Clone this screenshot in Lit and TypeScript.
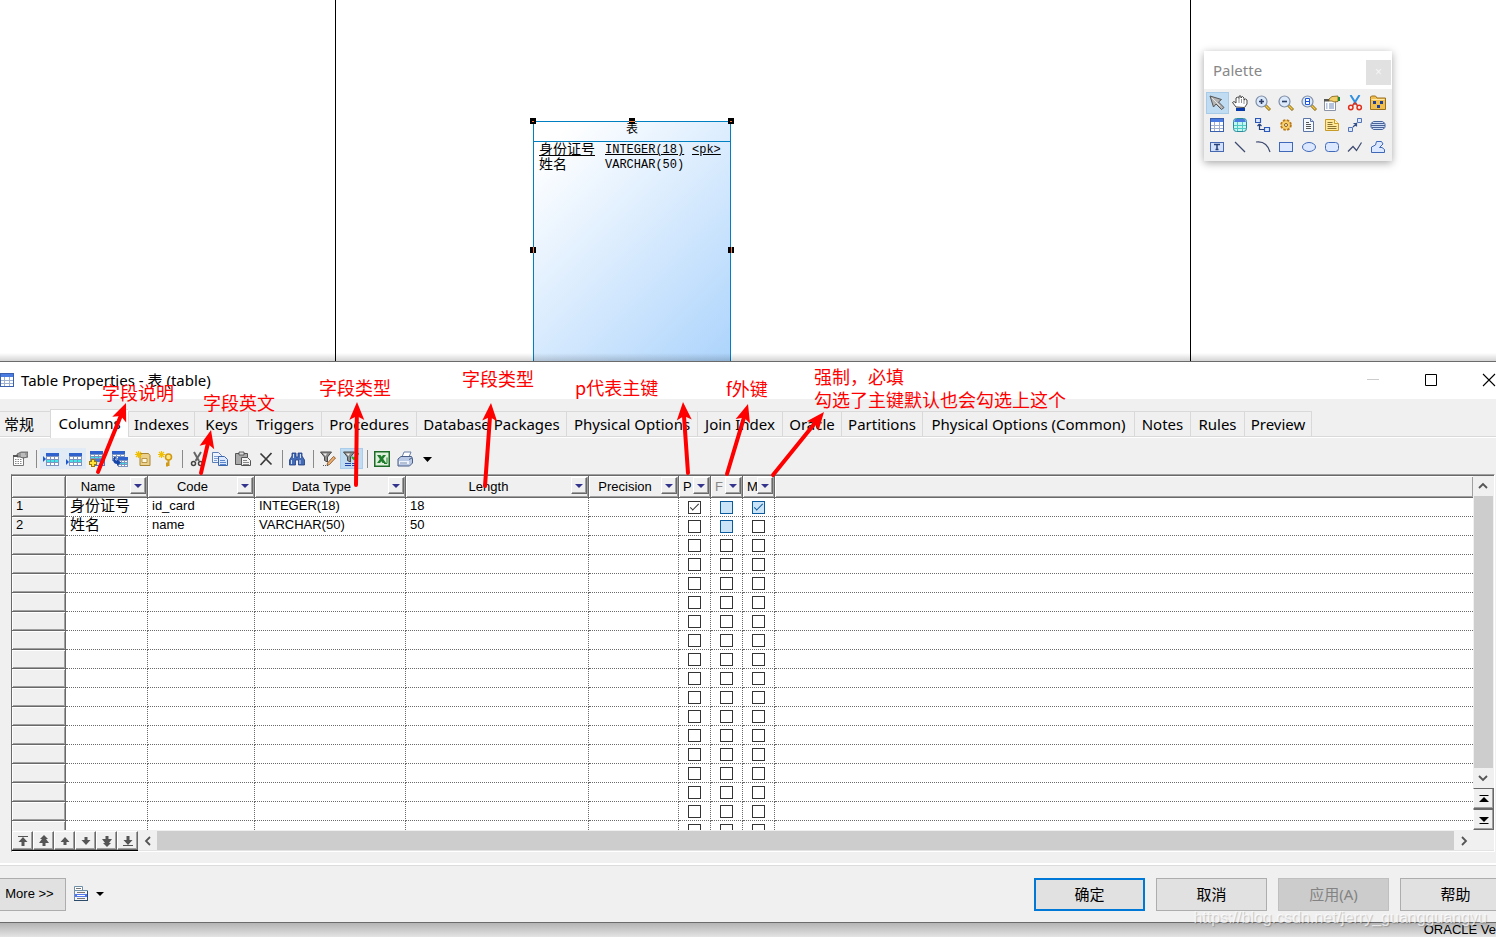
import { LitElement, html, svg, css, nothing } from "lit";
import { customElement, state } from "lit/decorators.js";
import { classMap } from "lit/directives/class-map.js";

type Column = { key: string; label: string; cls: string };
type Row = { name?: string; code?: string; type?: string; length?: string; p?: boolean; m?: boolean; named?: boolean };
type Arrow = [number, number, number, number];
type Note = [number, number, string];

const TABS = [
  "常规", "Columns", "Indexes", "Keys", "Triggers", "Procedures", "Database Packages",
  "Physical Options", "Join Index", "Oracle", "Partitions", "Physical Options (Common)",
  "Notes", "Rules", "Preview",
];

const COLUMNS: Column[] = [
  { key: "name", label: "Name", cls: "c-name" },
  { key: "code", label: "Code", cls: "c-code" },
  { key: "type", label: "Data Type", cls: "c-type" },
  { key: "length", label: "Length", cls: "c-length" },
  { key: "precision", label: "Precision", cls: "c-precision" },
  { key: "p", label: "P", cls: "c-flag" },
  { key: "f", label: "F", cls: "c-flag" },
  { key: "m", label: "M", cls: "c-flag" },
];

const ROWS: Row[] = [
  { name: "身份证号", code: "id_card", type: "INTEGER(18)", length: "18", p: true, m: true, named: true },
  { name: "姓名", code: "name", type: "VARCHAR(50)", length: "50", named: true },
  ...Array.from({ length: 16 }, () => ({})),
];

const ARROWS: Arrow[] = [
  [98, 472, 126, 403],
  [201, 473, 211, 430],
  [356, 485, 357, 402],
  [485, 486, 491, 403],
  [688, 473, 683, 402],
  [727, 474, 748, 404],
  [773, 475, 824, 412],
];

const NOTES: Note[] = [
  [102, 400, "字段说明"],
  [203, 410, "字段英文"],
  [319, 395, "字段类型"],
  [462, 386, "字段类型"],
  [575, 395, "p代表主键"],
  [726, 396, "f外键"],
  [814, 384, "强制，必填"],
  [814, 407, "勾选了主键默认也会勾选上这个"],
];

const icon = (body: unknown, label = "") =>
  html`<svg class="icon" viewBox="0 0 16 16" width="16" height="16" aria-label=${label || nothing}>${body}</svg>`;

const miniTable = (x: number, y: number, w: number, h: number, accent = "#fff") => svg`
  <rect x=${x} y=${y} width=${w} height=${h} fill="#7d93c0"/>
  <rect x=${x} y=${y} width=${w} height="3" fill="#2f62cc"/>
  ${[0, 1, 2].map((r) => [0, 1, 2].map((c) => svg`<rect
      x=${x + 1 + c * ((w - 1) / 3)} y=${y + 4 + r * ((h - 4) / 3)}
      width=${(w - 1) / 3 - 1} height=${(h - 4) / 3 - 1} fill=${r === 1 ? accent : "#fff"}/>`))}`;

const magnifier = (mark: unknown) => svg`
  <path d="M10 10l5 5" stroke="#8a6a10" stroke-width="3"/><path d="M10.500 10.500l4 4" stroke="#f2c94a" stroke-width="1.500"/>
  <circle cx="6.500" cy="6.500" r="5.500" fill="#dbe9fb" stroke="#7f8ea6" stroke-width="1.200"/>${mark}`;

const funnel = svg`<path d="M0.500 1h11L7.500 6v5l-3-1.500V6z" fill="#8c8c8c" stroke="#4a4a4a"/><path d="M3 2.500h4L5.500 5z" fill="#eee"/>`;

const I = {
  props: svg`<path d="M1.500 5.500h10v9h-10z" fill="#fff" stroke="#777"/><path d="M3 8.500h7M3 10.500h7M3 12.500h7" stroke="#888" stroke-dasharray="1.500 1"/>
    <path d="M5 3l4-2 7 0v5l-5 1-3-1-3 0z" fill="#999" stroke="#555" stroke-width=".8"/><path d="M1 4h5v2H1z" fill="#555"/><path d="M9 3h4M9 5h5" stroke="#ddd"/>`,
  insertRow: svg`<path d="M0 5l3 3-3 3z" fill="#1b57d0"/>${miniTable(3, 2, 13, 13, "#38e8e8")}`,
  addRow: svg`<path d="M0 8l3 3-3 3z" fill="#1b57d0"/>${miniTable(3, 2, 13, 13, "#38e8e8")}`,
  addCols: svg`${miniTable(1, 0, 13, 10, "#38e8e8")}<path d="M6 8h10v7H6z" fill="#4b78d6"/><path d="M7 11h8v3H7z" fill="#cfe0ff"/>
    <path d="M4 8v8M0 12h8" stroke="#a07800" stroke-width="4"/><path d="M4 9v6M1 12h6" stroke="#ffe23c" stroke-width="2"/>`,
  replaceCols: svg`${miniTable(0, 0, 13, 10, "#fff")}${miniTable(6, 6, 10, 10, "#38e8e8")}<path d="M2 6c-2 4 0 7 3 7v2l4-3.500L5 8v2c-2 0-2-2-1-4z" fill="#1544a8"/>`,
  addIndex: svg`<path d="M5 2.500h8.500l1.500 2v10H5z" fill="#ead08b" stroke="#a98433"/><path d="M7 7.500h5v4H7z" fill="#fff8dc" stroke="#a98433" stroke-width=".8"/>
    <path d="M3.500 0v7M0 3.500h7M1 1l5 5M6 1l-5 5" stroke="#f0c000" stroke-width="1.200"/>`,
  addKey: svg`<circle cx="10.500" cy="6" r="3" fill="#ffe680" stroke="#d09a18" stroke-width="1.600"/><path d="M10.500 9V15M10 12.500H8M10 14.500H8" stroke="#d09a18" stroke-width="2"/>
    <path d="M3.500 0v7M0 3.500h7M1 1l5 5M6 1l-5 5" stroke="#f0c000" stroke-width="1.200"/>`,
  cut: svg`<path d="M5 1l5 9M12 1L6.500 10" stroke="#666" stroke-width="2"/><circle cx="4.500" cy="12.500" r="2" fill="none" stroke="#444" stroke-width="1.500"/><circle cx="11.500" cy="12.500" r="2" fill="none" stroke="#444" stroke-width="1.500"/>`,
  copy: svg`<path d="M.5 1.500h6l3 3v7h-9z" fill="#eef4ff" stroke="#5c7fb8"/><path d="M2 5.500h5M2 7.500h5M2 9.500h3" stroke="#7fa0d0"/>
    <path d="M6.500 5.500h6l3 3v6h-9z" fill="#dbe8ff" stroke="#3d66ad"/><path d="M8 9.500h5M8 11.500h6M8 13.500h6" stroke="#5c86cc"/>`,
  paste: svg`<path d="M.5 2.500h12v11H.5z" fill="#aaa" stroke="#555"/><path d="M4 1h5v3H4z" fill="#ddd" stroke="#444" stroke-width=".8"/>
    <path d="M6.500 6.500h6l3 3v5h-9z" fill="#f4f4f4" stroke="#555"/><path d="M8 9.500h4M8 11.500h6M8 13.500h6" stroke="#888"/>`,
  remove: svg`<path d="M2.500 2.500l11 11M13.500 2l-11 12" stroke="#3a3a3a" stroke-width="1.700"/>`,
  find: svg`<path d="M3 2h4v4h2V2h4v3l2.500 4v5H9.500V9h-3v5H.5V9L3 5z" fill="#456bb5" stroke="#1d3b80" stroke-width=".8"/><path d="M2.500 9v4M4.500 3v4M11 9v4M11.500 3v4" stroke="#cfe0ff"/>`,
  filterEdit: svg`${funnel}<path d="M15.500 7l-6 6.500-2.500 1 .5-2.500L13.500 5.500z" fill="#f0b070" stroke="#7a4a20" stroke-width=".8"/><path d="M3 14.500h5" stroke="#555" stroke-dasharray="1 1"/>`,
  filterOn: svg`${funnel}<path d="M9 6l2 2 4.500-6" fill="none" stroke="#1faa2a" stroke-width="2"/><path d="M2 12.500h6M9 12.500h6M2 14.500h6M9 14.500h6" stroke="#2745a8"/>`,
  excel: svg`<rect x=".75" y=".75" width="14.500" height="14.500" fill="#dff0dc" stroke="#1e6b28" stroke-width="1.500"/><path d="M3 4h3.500l5.500 8H8.500z" fill="#1f7d2c"/><path d="M12 4H9L3 12h3z" fill="#1f7d2c"/><path d="M10 12.500h3v-6" fill="none" stroke="#1f7d2c"/>`,
  print: svg`<path d="M5 6l2-5h7l-2 5z" fill="#fff" stroke="#6a7fa5"/><path d="M1 8l3-2.500h10.500l1 2v4.500l-3 3H1z" fill="#b9c8e4" stroke="#4a5f88"/><path d="M2 10h10v3H2z" fill="#eef3fc"/><path d="M12 8.500l3-1.500" stroke="#4a5f88"/><path d="M3 12h7" stroke="#7a8cb0"/>`,
  caret: svg`<path d="M3 6h9L7.500 11z" fill="#000"/>`,
  caretSmall: svg`<path d="M4 6h8l-4 4z" fill="#000"/>`,
  menuSheet: svg`<path d="M.5 .5h8v5h-8z" fill="#fff" stroke="#6f8fa8"/><path d="M2 2.500h5" stroke="#777"/><path d="M.5 4.500h13v10H.5z" fill="#f6f6f6" stroke="#6f8fa8"/><path d="M13.500 5v10M0 14.500h14" stroke="#2c4a6a"/>
    <path d="M3 6.500h8M3 12.500h8" stroke="#777"/><path d="M1 8h12v3H1z" fill="#5577ee"/><path d="M3 9.500h8" stroke="#fff"/>`,
  pointer: svg`<path d="M1 1l3.500 11 2.500-3 5.500 5.500 2.500-2-5.500-5.500 3-2.500z" fill="#b4b4b4" stroke="#555"/><path d="M3 3l8 8" stroke="#e4e4e4"/>`,
  hand: svg`<path d="M4 12L.5 7.500l1.500-1L4 8V3l1.500-1L7 3.500V1h2v2l1.500-1.500L12 3v2l1.500-1L15 5v4l-2.500 3.500z" fill="#fff" stroke="#333" stroke-width=".9"/><path d="M7 4v4M9.500 4v4M12 5v4" stroke="#666" stroke-width=".7"/><path d="M4 13h9v3H4z" fill="#0a3ba8"/>`,
  zoomIn: magnifier(svg`<path d="M6.500 4v5M4 6.500h5" stroke="#2d3e66" stroke-width="1.600"/>`),
  zoomOut: magnifier(svg`<path d="M4 6.500h5" stroke="#2d3e66" stroke-width="1.600"/>`),
  zoomFit: magnifier(svg`<path d="M4.500 3.500h4v6h-4zM4.500 6.500h4" fill="#fff" stroke="#1f55d8"/>`),
  propsColor: svg`<path d="M.5 5.500h11v10H.5z" fill="#fff" stroke="#8a93a5"/><path d="M2 9h1.500M5 9h5M2 11h1.500M5 11h5M2 13h1.500M5 13h5" stroke="#6b86b8"/>
    <path d="M5 4l3-2.500L14 1v5.500l-4 .5-2-1H5z" fill="#f3cf6a" stroke="#7a5a10" stroke-width=".8"/><path d="M14 2h2v4h-2z" fill="#1a8a3a"/><path d="M0 4h5v2.500H0z" fill="#555"/>`,
  scissors: svg`<path d="M3.500 0l6 9.500M12.500 0l-6 9.500" stroke="#2f8fe0" stroke-width="2"/><circle cx="3.800" cy="12.500" r="2.200" fill="none" stroke="#e0301c" stroke-width="1.500"/><circle cx="12.200" cy="12.500" r="2.200" fill="none" stroke="#e0301c" stroke-width="1.500"/><path d="M5 11l3-3 3 3" fill="none" stroke="#e0301c" stroke-width="1.500"/>`,
  packageBox: svg`<path d="M.5 3.500V2l1-1h4l1.500 2h8.500v11.500H.5z" fill="#f0bf50" stroke="#9a7020"/><path d="M1.500 4.500h13" stroke="#ffe9a8"/><path d="M3 6h3v3H3zM10 6h3v3h-3zM7 10h3v3H7z" fill="#1e3f9a"/>`,
  table: svg`<rect x="1.500" y="1.500" width="13" height="13" fill="#fff" stroke="#3a5fae"/><rect x="2" y="2" width="12" height="3" fill="#4a7be0"/><path d="M2 8.500h12M2 11.500h12M5.500 5v9M10.500 5v9" stroke="#9fb0d0"/>`,
  view: svg`<rect x="1.500" y="1.500" width="13" height="13" rx="3" fill="#c4f6f2" stroke="#2a8c9c"/><path d="M3.500 2h9l1.500 3H2z" fill="#4a7be0"/><path d="M2 8.500h12M2 11.500h12M5.500 5v9M10.500 5v9" stroke="#50c8c4"/>`,
  reference: svg`<path d="M.5 1.500h5v4h-5zM9.500 10.500h5v4h-5z" fill="#dce8ff" stroke="#2a57b8" stroke-width="1.200"/><path d="M4.500 7v5.500h4.500M4.500 7L2.500 9M4.500 7l2 2" fill="none" stroke="#223f80" stroke-width="1.200"/>`,
  procedure: svg`<circle cx="8" cy="8" r="4.800" fill="#f6c050" stroke="#b87818" stroke-width="2" stroke-dasharray="2.400 1.400"/><circle cx="8" cy="8" r="3.800" fill="#f8cf6c"/><circle cx="8" cy="8" r="1.500" fill="#fff" stroke="#8a5a10"/>`,
  file: svg`<path d="M2.500 1.500h7l3 3v10h-10z" fill="#f4f8ff" stroke="#5b76a6"/><path d="M9.500 1.500v3h3" fill="#cad8f2" stroke="#5b76a6"/><path d="M5 5.500h3M5 7.500h5M5 9.500h5M5 11.500h5" stroke="#555"/>`,
  note: svg`<path d="M1.500 2.500h9l4 4v7h-13z" fill="#ffe89a" stroke="#c89a28"/><path d="M10.500 2.500v4h4" fill="#fff5cc" stroke="#c89a28"/><path d="M3.500 5.500h5M3.500 7.500h5M3.500 9.500h9M3.500 11.500h9" stroke="#8a7430"/>`,
  link: svg`<path d="M1.500 10.500h4v4h-4zM10.500 1.500h4v4h-4z" fill="#dce8ff" stroke="#5575b8"/><path d="M6 10l4-4M6.500 6.500h3v3" fill="none" stroke="#34508c" stroke-width="1.200"/>`,
  database: svg`<path d="M3.500 4.500h9l2.500 2v4l-2.500 2h-9L1 10.500v-4z" fill="#cdddf8" stroke="#46639c"/><path d="M2 6.500h12M1 8.500h14M2 10.500h12" stroke="#4a6296"/>`,
  text: svg`<rect x="1.500" y="3.500" width="13" height="9" fill="#d2e0fa" stroke="#4668b0"/><path d="M5 5.500h6M8 5.500v5M6.500 10.500h3" stroke="#28407a" stroke-width="1.500"/>`,
  line: svg`<path d="M3 3l10 10" stroke="#3d4a70" stroke-width="1.200"/>`,
  arc: svg`<path d="M1 3c7-1 12 3 14 10" fill="none" stroke="#3d4a70" stroke-width="1.200"/>`,
  rect: svg`<rect x="1.500" y="3.500" width="13" height="9" fill="#dce8ff" stroke="#3f68b8"/>`,
  ellipse: svg`<ellipse cx="8" cy="8" rx="6.500" ry="4.500" fill="#dce8ff" stroke="#3f68b8"/>`,
  rounded: svg`<rect x="1.500" y="3.500" width="13" height="9" rx="3" fill="#dce8ff" stroke="#3f68b8"/>`,
  polyline: svg`<path d="M1 12.500l5-5 3.500 4 5-8" fill="none" stroke="#3d4a70" stroke-width="1.200"/>`,
  polygon: svg`<path d="M1.500 13.500V8l4-2 1-3.500h5L13 5 9.500 8.500H12l2.500 2v3z" fill="#dce8ff" stroke="#3f68b8"/>`,
  navFirst: svg`<path d="M3 3.500h10" stroke="#555"/><path d="M8 4l4.500 5H9.500v4h-3V9h-3z" fill="#555"/>`,
  navPageUp: svg`<path d="M8 2l4 4H10l3 4H9.500v3h-3v-3H3l3-4H4z" fill="#555"/>`,
  navUp: svg`<path d="M8 4l4.500 5H9.500v3h-3V9h-3z" fill="#555"/>`,
  navDown: svg`<path d="M8 12l4.500-5H9.500V4h-3v3h-3z" fill="#555"/>`,
  navPageDown: svg`<path d="M8 14l4-4H10l3-4H9.500V3h-3v3H3l3 4H4z" fill="#555"/>`,
  navLast: svg`<path d="M3 12.500h10" stroke="#555"/><path d="M8 12l4.500-5H9.500V3h-3v4h-3z" fill="#555"/>`,
  chevUp: svg`<path d="M4 10l4-4 4 4" fill="none" stroke="#555" stroke-width="1.800"/>`,
  chevDown: svg`<path d="M4 6l4 4 4-4" fill="none" stroke="#555" stroke-width="1.800"/>`,
  chevLeft: svg`<path d="M10 4L6 8l4 4" fill="none" stroke="#555" stroke-width="1.800"/>`,
  chevRight: svg`<path d="M6 4l4 4-4 4" fill="none" stroke="#555" stroke-width="1.800"/>`,
  splitTop: svg`<path d="M3.500 4.500h9" stroke="#000"/><path d="M8 6l5 5H3z" fill="#000"/>`,
  splitBottom: svg`<path d="M3.500 11.500h9" stroke="#000"/><path d="M8 10l5-5H3z" fill="#000"/>`,
  minimize: svg`<path d="M2 7.500h12" stroke="#ccc"/>`,
  maximize: svg`<path d="M2.500 2.500h11v11h-11z" fill="none" stroke="#000"/>`,
  close: svg`<path d="M2 2l12 12M14 2L2 14" stroke="#000" stroke-width="1.100"/>`,
};

@customElement("tool-palette")
export class ToolPalette extends LitElement {
  @state() private selected = 0;

  static styles = css`
    :host { display: block; background: #f0f0f0; box-shadow: 0 2px 8px rgba(0, 0, 0, 0.35); }
    .title { display: flex; align-items: center; justify-content: space-between; height: 38px; padding-left: 9px; padding-right: 1px;
      background: #fff; color: #888; font: 15px/20px "Noto Sans", sans-serif; }
    .close { width: 25px; height: 25px; margin-top: 4px; border: 0; padding: 0; background: #e1e1e1; color: #f6f6f6; font: 12px/20px "Liberation Sans", sans-serif; }
    .tools { display: grid; grid-template-columns: repeat(8, 23px); grid-auto-rows: 22px; padding: 3px 2px; }
    .tool { display: flex; align-items: center; border: 1px solid transparent; background: none; padding: 0 0 0 2px; }
    .tool.selected { background: #c0dcf3; border-color: #a8cbe8; }
    .icon { display: block; flex: none; }
  `;

  render() {
    const tools: [string, unknown][] = [
      ["Pointer", I.pointer], ["Grabber", I.hand], ["Zoom In", I.zoomIn], ["Zoom Out", I.zoomOut],
      ["Open Diagram", I.zoomFit], ["Properties", I.propsColor], ["Delete", I.scissors], ["Package", I.packageBox],
      ["Table", I.table], ["View", I.view], ["Reference", I.reference], ["Procedure", I.procedure],
      ["File", I.file], ["Note", I.note], ["Link", I.link], ["Database", I.database],
      ["Text", I.text], ["Line", I.line], ["Arc", I.arc], ["Rectangle", I.rect],
      ["Ellipse", I.ellipse], ["Rounded Rectangle", I.rounded], ["Polyline", I.polyline], ["Polygon", I.polygon],
    ];
    return html`
      <div class="title"><span>Palette</span><button class="close" aria-label="Close">×</button></div>
      <div class="tools">
        ${tools.map(([label, body], i) => html`<button
          class=${classMap({ tool: true, selected: i === this.selected })}
          aria-label=${label} @click=${() => (this.selected = i)}>${icon(body)}</button>`)}
      </div>`;
  }
}

@customElement("table-symbol")
export class TableSymbol extends LitElement {
  static styles = css`
    :host { display: block; box-sizing: border-box; border: 1px solid #0080c0; color: #000;
      background: linear-gradient(135deg, #fff 8%, #a9d2fc 100%);
      font: 12px/15px "Liberation Mono", "Noto Sans CJK SC", monospace; }
    .head { height: 19px; line-height: 17px; text-align: center; border-bottom: 1px solid #0080c0; }
    .fields { display: grid; grid-template-columns: 66px 87px auto; padding: 1px 0 0 5px; }
    .cjk { font-size: 14px; }
    .key { text-decoration: underline; text-underline-offset: 1px; }
    .handle { position: absolute; display: grid; place-items: center; width: 6px; height: 6px; background: #000; }
    .handle::before { content: ""; background: #ff7f3f; }
    .t::before { width: 6px; height: 1px; }
    .m::before { width: 1px; height: 6px; }
    .t { top: -4px; } .m { top: 125px; }
    .l { left: -4px; } .c { left: 95px; } .r { right: -4px; }
    .t.l::before, .t.r::before { width: 2px; }
  `;

  render() {
    return html`
      <div class="head">表</div>
      <div class="fields">
        <span class="cjk"><span class="key">身份证号</span></span><span><span class="key">INTEGER(18)</span></span><span><span class="key">&lt;pk&gt;</span></span>
        <span class="cjk">姓名</span><span>VARCHAR(50)</span><span></span>
      </div>
      <i class="handle t l"></i><i class="handle t c"></i><i class="handle t r"></i>
      <i class="handle m l"></i><i class="handle m r"></i>`;
  }
}

@customElement("column-grid")
export class ColumnGrid extends LitElement {
  static styles = css`
    :host { display: grid; grid-template-columns: minmax(0, 1fr) 21px; grid-template-rows: minmax(0, 1fr) 21px;
      border-style: solid; border-width: 1px; border-color: #a0a0a0 #fff #fff #696969; box-shadow: inset 0 1px #696969, inset 0 -1px #e3e3e3;
      padding-top: 1px; font: 13px/18px "Liberation Sans", "Noto Sans CJK SC", sans-serif; color: #000; background: #f0f0f0; }
    .view { overflow: hidden; background: #fff; }
    table { width: 100%; table-layout: fixed; border-collapse: separate; border-spacing: 0; }
    th, td { box-sizing: border-box; padding: 0; font-weight: normal; overflow: hidden; white-space: nowrap; text-align: left; }
    .c-head { width: 54px; } .c-name { width: 82px; } .c-code { width: 107px; } .c-type { width: 151px; }
    .c-length { width: 183px; } .c-precision { width: 90px; } .c-flag { width: 32px; }
    thead th { height: 22px; background: #f0f0f0; border-right: 1px solid #696969; border-bottom: 1px solid #696969;
      box-shadow: inset 1px 1px #fff, inset -1px -1px #a0a0a0; }
    thead th:last-child { border-right: 0; }
    .caption { display: flex; align-items: center; height: 21px; }
    .caption .label { flex: 1; min-width: 0; text-align: center; overflow: hidden; }
    .c-flag .label { padding-left: 4px; text-align: left; }
    .muted { color: #888; }
    .filter { display: grid; place-items: center; box-sizing: border-box; width: 16px; height: 17px; padding: 0; margin: 0 1px 2px 0; background: #f0f0f0;
      border: 1px solid; border-color: #fff #696969 #696969 #fff; box-shadow: inset -1px -1px #a0a0a0; }
    .tri { width: 0; height: 0; border: 4px solid transparent; border-top-color: #34348c; border-bottom: 0; }
    tbody th { height: 19px; padding: 0 0 2px 4px; background: #f0f0f0; border-right: 1px solid #696969; border-bottom: 1px solid #696969;
      box-shadow: inset 1px 1px #fff, inset -1px -1px #a0a0a0; line-height: 16px; }
    tbody td { height: 19px; padding: 0 0 2px 4px; border-right: 1px dotted #696969; border-bottom: 1px dotted #696969; line-height: 16px; }
    tbody td:last-child { border-right: 0; }
    tbody td.flag { padding: 0; }
    tbody td.cjk { font-size: 15px; padding-bottom: 3px; line-height: 15px; }
    .box { appearance: none; display: grid; place-items: center; box-sizing: border-box; width: 13px; height: 13px; margin: 1px auto 0; border: 1px solid #333; background: #fff; }
    .box:checked::before { content: ""; width: 9px; height: 4px; margin-top: -3px; box-sizing: border-box; border-left: 1px solid #333; border-bottom: 1px solid #333; transform: rotate(-45deg); }
    .box.hot, .box.hot:checked::before { border-color: #0a5a9c; }
    .box.hot { background: #cce4f7; }
    .vbar { display: flex; flex-direction: column; }
    .arrow { display: grid; place-items: center; width: 20px; height: 20px; padding: 0; border: 0; background: #f0f0f0; }
    .thumb { flex: 1; background: #cdcdcd; }
    .vbar .thumb { margin: 0 1px; }
    .raised { display: grid; place-items: center; box-sizing: border-box; width: 21px; height: 21px; padding: 0; background: #f0f0f0;
      border: 1px solid; border-color: #fff #696969 #696969 #fff; box-shadow: inset -1px -1px #a0a0a0; }
    .vbar .raised { border-top-color: #696969; }
    .hbar { display: flex; border-top: 1px solid #f0f0f0; }
    .nav { display: flex; border-bottom: 1px solid #000; }
    .nav .raised { height: 19px; }
    .hbar .arrow { width: 19px; height: 19px; }
    .hbar .thumb { height: 19px; }
    .icon { display: block; }
  `;

  private flag(row: Row, key: "p" | "f" | "m", index: number) {
    const hot = (key === "f" && !!row.named) || (key === "m" && !!row.m);
    const checked = key === "p" ? !!row.p : key === "m" ? !!row.m : false;
    return html`<td class="flag"><input type="checkbox" class=${classMap({ box: true, hot })} .checked=${checked}
      aria-label="${key.toUpperCase()} ${index + 1}"></td>`;
  }

  render() {
    const nav: [string, unknown][] = [
      ["First", I.navFirst], ["Page up", I.navPageUp], ["Move up", I.navUp],
      ["Move down", I.navDown], ["Page down", I.navPageDown], ["Last", I.navLast],
    ];
    return html`
      <div class="view">
        <table>
          <thead><tr>
            <th class="c-head"></th>
            ${COLUMNS.map((c) => html`<th class=${c.cls}><div class="caption">
              <span class=${classMap({ label: true, muted: c.key === "f" })}>${c.label}</span>
              <button class="filter" aria-label="Filter ${c.label}"><span class="tri"></span></button></div></th>`)}
            <th></th>
          </tr></thead>
          <tbody>
            ${ROWS.map((r, i) => html`<tr>
              <th>${r.named ? i + 1 : nothing}</th>
              <td class="cjk">${r.name}</td><td>${r.code}</td><td>${r.type}</td><td>${r.length}</td><td></td>
              ${this.flag(r, "p", i)}${this.flag(r, "f", i)}${this.flag(r, "m", i)}
              <td></td>
            </tr>`)}
          </tbody>
        </table>
      </div>
      <div class="vbar">
        <button class="arrow" aria-label="Scroll up">${icon(I.chevUp)}</button>
        <div class="thumb"></div>
        <button class="arrow" aria-label="Scroll down">${icon(I.chevDown)}</button>
        <button class="raised" aria-label="Split top">${icon(I.splitTop)}</button>
        <button class="raised" aria-label="Split bottom">${icon(I.splitBottom)}</button>
      </div>
      <div class="hbar">
        <div class="nav">${nav.map(([l, b]) => html`<button class="raised" aria-label=${l}>${icon(b)}</button>`)}</div>
        <button class="arrow" aria-label="Scroll left">${icon(I.chevLeft)}</button>
        <div class="thumb"></div>
        <button class="arrow" aria-label="Scroll right">${icon(I.chevRight)}</button>
      </div>`;
  }
}

@customElement("app-root")
export class AppRoot extends LitElement {
  @state() private tab = 1;

  static styles = css`
    :host { display: flex; flex-direction: column; position: relative; height: 100vh; overflow: hidden; background: #fff;
      font: 15px/20px "Noto Sans", "Noto Sans CJK SC", sans-serif; color: #000; }
    .workspace { position: relative; flex: 0 0 361px; overflow: hidden; background: #fff; }
    .page { position: absolute; top: 0; bottom: 0; left: 335px; width: 854px; border: solid #000; border-width: 0 1px; }
    table-symbol { position: absolute; left: 533px; top: 121px; width: 198px; height: 258px; }
    tool-palette { position: absolute; left: 1204px; top: 51px; width: 188px; }
    .shade { position: absolute; left: 0; right: 0; bottom: 0; height: 8px; background: linear-gradient(transparent, rgba(0, 0, 0, 0.17)); }
    .dialog { flex: 1; min-height: 0; display: flex; flex-direction: column; background: #f0f0f0; border: solid #6b6b6b; border-width: 1px 0; overflow: hidden; }
    .titlebar { flex: none; display: flex; align-items: center; height: 37px; box-sizing: border-box; padding-bottom: 1px; margin-right: -22px; background: #fff; }
    .titlebar .icon { margin-left: -1px; }
    .titlebar h1 { flex: 1; margin: 0 0 0 6px; font-size: 15px; font-weight: normal; line-height: 20px; }
    .win { display: grid; place-items: center; width: 58px; height: 36px; padding: 0; border: 0; background: none; }
    .tabs { flex: none; display: grid; align-items: end; height: 38px; box-sizing: border-box; border-bottom: 1px solid #d9d9d9; box-shadow: 0 1px #fff;
      grid-template-columns: 50px 78px 66px 54px 73px 95px 150px 131px 85px 59px 81px 212px 56px 54px 68px; margin-bottom: 1px; }
    .tab { box-sizing: border-box; height: 25px; padding: 0; border: solid #d9d9d9; border-width: 1px 0 0 1px; background: #f0f0f0;
      font: inherit; line-height: 24px; color: #000; white-space: nowrap; text-align: center; }
    .tab:first-child { border-left: 0; padding-right: 12px; }
    .tab:last-child { border-right-width: 1px; }
    .tab.active { height: 29px; padding-bottom: 3px; margin-bottom: -2px; background: #fff; }
    .toolbar { flex: none; display: flex; padding: 10px 9px 5px; }
    .tool { display: flex; align-items: center; width: 23px; height: 21px; padding: 0 0 0 3px; border: 0; background: none; }
    .tool.soft { background: #e1ebf5; }
    .tool.on { background: #c0dcf3; box-shadow: inset 0 0 0 1px #a9cdea; }
    .sep { width: 1px; height: 18px; margin: 2px 3px 0 4px; background: #8a8a8a; }
    .icon { display: block; flex: none; }
    column-grid { flex: 1; min-height: 0; margin: 0 1px 11px 11px; }
    .footer { flex: none; display: flex; align-items: center; height: 56px; margin-right: -15px;
      border-top: 1px solid #dcdcdc; box-shadow: 0 -2px #fff; margin-top: 2px; }
    .btn { box-sizing: border-box; width: 111px; height: 33px; padding: 0; border: 1px solid #adadad; background: #e1e1e1; color: #000; font: inherit; }
    .btn.primary { border: 2px solid #0078d7; }
    .btn:disabled { background: #ccc; border-color: #bfbfbf; color: #838383; }
    .btn.more { width: 66px; border-left: 0; padding-right: 6px; font: 13px/16px "Liberation Sans", sans-serif; }
    .menu { display: flex; margin-left: 8px; padding: 0; border: 0; background: none; gap: 2px; }
    .actions { display: flex; gap: 11px; margin-left: auto; }
    .status { flex: 0 0 14px; text-align: right; background: linear-gradient(#b4b4b4, #e4e4e4); font: 13px/14px "Liberation Sans", sans-serif; white-space: nowrap; }
    .notes { position: absolute; inset: 0; width: 100%; height: 100%; pointer-events: none; overflow: hidden;
      font: 400 18px "Noto Sans CJK SC", sans-serif; fill: #f00; }
    .watermark { position: absolute; right: 9px; bottom: 9px; font: 16px/20px "Liberation Sans", sans-serif; color: rgba(255, 255, 255, 0.7);
      text-shadow: 1px 1px 1px rgba(0, 0, 0, 0.2); pointer-events: none; }
  `;

  private arrow([x1, y1, x2, y2]: Arrow) {
    const len = Math.hypot(x2 - x1, y2 - y1);
    const ux = (x2 - x1) / len;
    const uy = (y2 - y1) / len;
    const at = (back: number, side: number) => `${x2 - ux * back - uy * side},${y2 - uy * back + ux * side}`;
    return svg`
      <line x1=${x1} y1=${y1} x2=${x2 - ux * 10} y2=${y2 - uy * 10} stroke="#f00" stroke-width="4" stroke-linecap="round"/>
      <polygon points="${at(0, 0)} ${at(18, 7.5)} ${at(14, 0)} ${at(18, -7.5)}"/>`;
  }

  render() {
    const tool = (label: string, body: unknown, extra = "") =>
      html`<button class="tool ${extra}" aria-label=${label}>${icon(body)}</button>`;
    const sep = html`<span class="sep"></span>`;
    return html`
      <div class="workspace">
        <div class="page"></div>
        <table-symbol></table-symbol>
        <tool-palette></tool-palette>
        <div class="shade"></div>
      </div>
      <section class="dialog">
        <header class="titlebar">
          ${icon(I.table)}
          <h1>Table Properties - 表 (table)</h1>
          <button class="win" aria-label="Minimize">${icon(I.minimize)}</button>
          <button class="win" aria-label="Maximize">${icon(I.maximize)}</button>
          <button class="win" aria-label="Close">${icon(I.close)}</button>
        </header>
        <div class="tabs" role="tablist">
          ${TABS.map((t, i) => html`<button role="tab" aria-selected=${i === this.tab}
            class=${classMap({ tab: true, active: i === this.tab })} @click=${() => (this.tab = i)}>${t}</button>`)}
        </div>
        <div class="toolbar">
          ${tool("Properties", I.props)}${sep}
          ${tool("Insert a Row", I.insertRow, "soft")}${tool("Add a Row", I.addRow, "soft")}${tool("Add Columns", I.addCols)}
          ${tool("Replace Columns", I.replaceCols)}${tool("Create Index", I.addIndex)}${tool("Create Key", I.addKey)}${sep}
          ${tool("Cut", I.cut)}${tool("Copy", I.copy)}${tool("Paste", I.paste)}${tool("Delete", I.remove)}${sep}
          ${tool("Find", I.find)}${sep}
          ${tool("Customize Filter", I.filterEdit)}${tool("Enable Filter", I.filterOn, "on")}${sep}
          ${tool("Export to Excel", I.excel)}${tool("Print", I.print)}${tool("Print options", I.caret)}
        </div>
        <column-grid></column-grid>
        <footer class="footer">
          <button class="btn more">More &gt;&gt;</button>
          <button class="menu" aria-label="Menu">${icon(I.menuSheet)}${icon(I.caretSmall)}</button>
          <div class="actions">
            <button class="btn primary">确定</button>
            <button class="btn">取消</button>
            <button class="btn" disabled>应用(A)</button>
            <button class="btn">帮助</button>
          </div>
        </footer>
      </section>
      <div class="status">ORACLE Ve</div>
      <svg class="notes" aria-hidden="true">
        ${ARROWS.map((a) => this.arrow(a))}
        ${NOTES.map(([x, y, t]) => svg`<text x=${x} y=${y}>${t}</text>`)}
      </svg>
      <div class="watermark">https://blog.csdn.net/jerry_guangguangyu</div>`;
  }
}
